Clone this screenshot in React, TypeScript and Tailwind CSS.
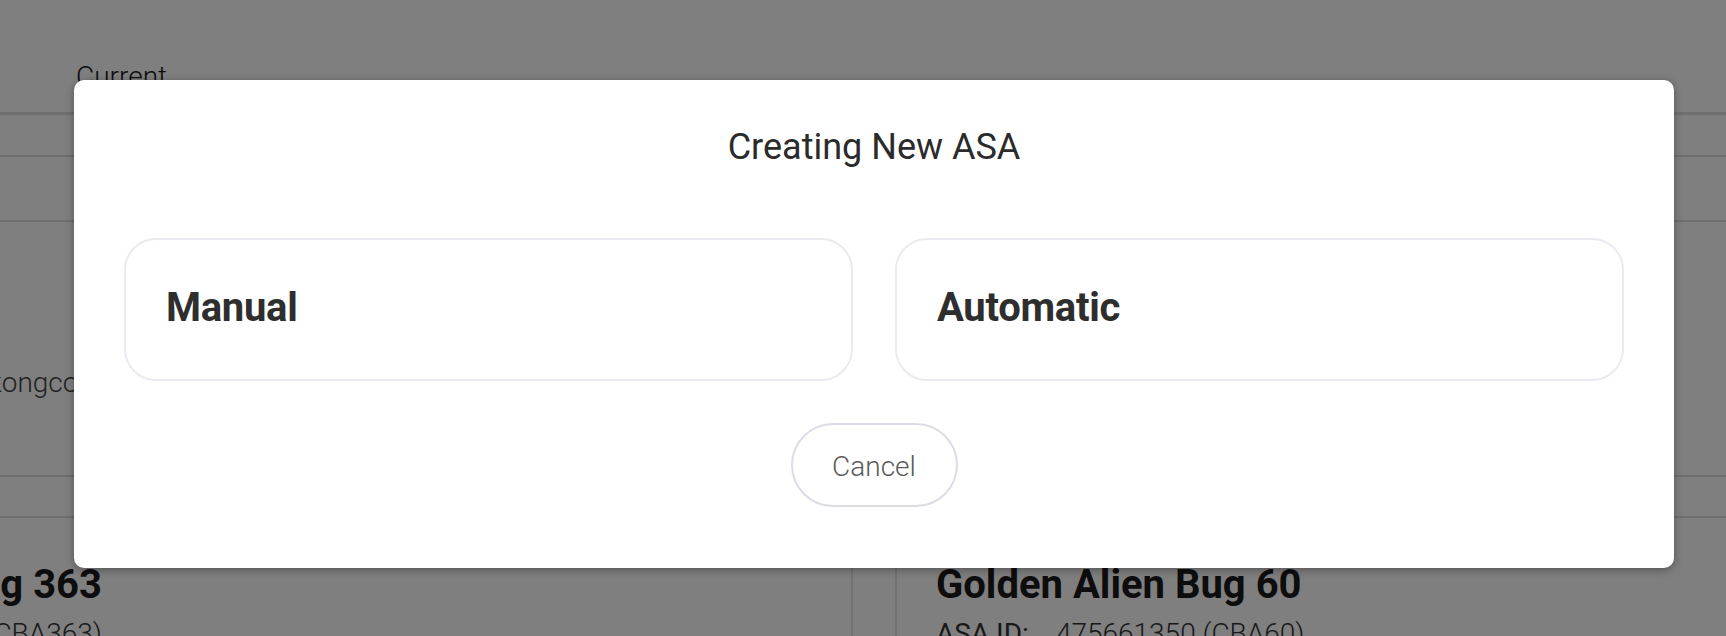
import React from 'react';

// Background page (dimmed) + "Creating New ASA" modal
function BackgroundPage() {
  return (
    <div className="w-[1726px] h-[636px] bg-white text-[#1a1a1a]">
      <div className="h-[112px] pl-[76px] pt-[60px]">
        <span className="text-[28px] font-light leading-[33px]">Current</span>
      </div>
      <div className="h-[3px] bg-[#dedede]" />
      <div className="h-[40px]" />
      <div className="h-[2px] bg-[#dedede]" />
      <div className="h-[63px]" />
      <div className="h-[2px] bg-[#dedede]" />
      <div className="h-[253px] pt-[144px]">
        <div className="w-[120px] overflow-hidden whitespace-nowrap">
          <span className="ml-[-63px] text-[28px] font-light leading-[33px] text-[#444]">kingkongcool</span>
        </div>
      </div>
      <div className="h-[2px] bg-[#dedede]" />
      <div className="h-[39px]" />
      <div className="h-[2px] bg-[#dedede]" />
      <div className="flex h-[120px]">
        <div className="w-[853px] border-r-2 border-[#e4e4e4] pt-[43px]">
          <div className="w-[102px] overflow-hidden whitespace-nowrap flex flex-col items-end">
            <span className="text-[40px] font-bold leading-[47px]">Golden Alien Bug 363</span>
            <span className="mt-[8px] text-[28px] font-light leading-[36px] text-[#333]">ASA ID: 475661363 (CBA363)</span>
          </div>
        </div>
        <div className="w-[42px]" />
        <div className="flex-1 border-l-2 border-[#e4e4e4] pl-[39px] pt-[43px]">
          <div className="text-[40px] font-bold leading-[47px]">Golden Alien Bug 60</div>
          <div className="mt-[8px] text-[28px] font-light leading-[36px] text-[#333] whitespace-nowrap">
            <span className="font-normal mr-[27px]">ASA ID:</span>475661350 (CBA60)
          </div>
        </div>
      </div>
    </div>
  );
}

function ChoiceCard({ label }: { label: string }) {
  return (
    <button className="flex-1 h-[143px] rounded-[32px] border-2 border-[#eaeaf1] bg-white pl-[40px] pt-[44px] text-left flex items-start cursor-pointer">
      <span className="text-[40px] font-bold leading-[47px] tracking-[-0.3px] text-[#2e2e2e]">{label}</span>
    </button>
  );
}

export default function App() {
  return (
    <div
      className="relative w-[1726px] h-[636px] overflow-hidden"
      style={{ fontFamily: 'Roboto, "Liberation Sans", sans-serif' }}
    >
      <BackgroundPage />
      <div className="absolute inset-0 bg-black/50 pt-[80px] pl-[74px]">
        <div className="w-[1600px] bg-white rounded-[10px] shadow-[0_2px_8px_rgba(0,0,0,0.35)] px-[50px] pt-[46px] pb-[61px] flex flex-col items-center">
          <h2 className="text-[36px] font-normal leading-[42px] text-[#2b2b2b]">Creating New ASA</h2>
          <div className="mt-[70px] w-full flex gap-[42px]">
            <ChoiceCard label="Manual" />
            <ChoiceCard label="Automatic" />
          </div>
          <button className="mt-[42px] w-[167px] h-[84px] rounded-full border-2 border-[#dcdce6] bg-white pt-[3px] text-[28px] font-light text-[#5a5a5a] cursor-pointer">
            Cancel
          </button>
        </div>
      </div>
    </div>
  );
}
